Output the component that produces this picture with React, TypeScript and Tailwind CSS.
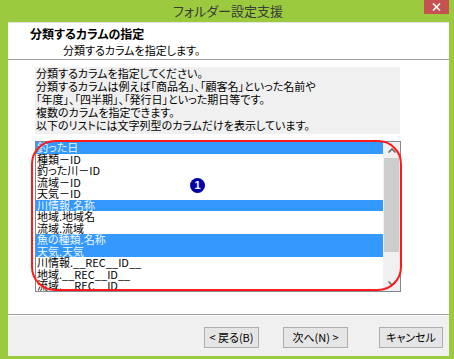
import React from "react";

const items: { label: string; sel: boolean }[] = [
  { label: "釣った日", sel: true },
  { label: "種類－ID", sel: false },
  { label: "釣った川－ID", sel: false },
  { label: "流域－ID", sel: false },
  { label: "天気－ID", sel: false },
  { label: "川情報.名称", sel: true },
  { label: "地域.地域名", sel: false },
  { label: "流域.流域", sel: false },
  { label: "魚の種類.名称", sel: true },
  { label: "天気.天気", sel: true },
  { label: "川情報.__REC__ID__", sel: false },
  { label: "地域.__REC__ID__", sel: false },
  { label: "流域.__REC__ID__", sel: false },
];

export default function App() {
  return (
    <div className="w-[454px] h-[359px] bg-[#9bca3e] flex flex-col overflow-hidden font-['Noto_Sans_CJK_JP','Liberation_Sans',sans-serif] [font-feature-settings:'palt'] text-black">
      {/* title bar */}
      <div className="relative h-[22px] flex items-center justify-center text-[13px] leading-[22px] text-[#3a3a3a]">
        <span className="pl-[2px]">フォルダー設定支援</span>
        <div className="absolute right-[5px] top-0 w-[25px] h-[14px] bg-[#c75050] flex items-center justify-center">
          <svg width="9" height="8" viewBox="0 0 9 8">
            <path d="M1 0.5 L8 7.5 M8 0.5 L1 7.5" stroke="white" strokeWidth="1.6" />
          </svg>
        </div>
      </div>

      <div className="ml-[8px] mr-[5px] h-[334px] flex flex-col bg-white">
        {/* header */}
        <div className="h-[38px] border-t border-[#e3e3e3] border-b border-b-[#a0a0a0] pl-[22px] pt-[3px]">
          <div className="text-[12px] font-bold leading-[15px]">分類するカラムの指定</div>
          <div className="pl-[33px] text-[11px] leading-[15px] mt-[2px]">分類するカラムを指定します。</div>
        </div>

        {/* body */}
        <div className="h-[254px] pl-[27px] pt-[7px]">
          <div className="w-[365px] h-[67px] bg-[#f0f0f0] text-[11px] leading-[13px] pl-[1px]">
            <div>分類するカラムを指定してください。</div>
            <div>分類するカラムは例えば「商品名」、「顧客名」といった名前や</div>
            <div>「年度」、「四半期」、「発行日」といった期日等です。</div>
            <div>複数のカラムを指定できます。</div>
            <div>以下のリストには文字列型のカラムだけを表示しています。</div>
          </div>

          <div className="relative mt-[7px] w-[366px] h-[151px]">
            <div className="w-full h-full border border-[#828790] flex overflow-hidden">
              <div className="flex-1 flex flex-col overflow-hidden">
                {items.map((it, i) => (
                  <div
                    key={i}
                    className={
                      it.sel
                        ? "shrink-0 h-[11.5px] leading-[11.5px] text-[11px] pl-[1px] bg-[#3399ff] text-[#f0f6ff] whitespace-nowrap"
                        : "shrink-0 h-[11.5px] leading-[11.5px] text-[11px] pl-[1px] text-black whitespace-nowrap"
                    }
                  >
                    {it.label}
                  </div>
                ))}
              </div>
              {/* scrollbar */}
              <div className="w-[17px] h-full bg-[#f0f0f0] flex flex-col">
                <div className="h-[16px] flex items-center justify-center">
                  <svg width="8" height="5" viewBox="0 0 8 5">
                    <path d="M0.5 4.5 L4 1 L7.5 4.5" stroke="#606060" strokeWidth="1.5" fill="none" />
                  </svg>
                </div>
                <div className="mx-[1px] h-[94px] bg-[#cdcdcd]" />
                <div className="flex-1" />
                <div className="h-[16px] flex items-center justify-center">
                  <svg width="8" height="5" viewBox="0 0 8 5">
                    <path d="M0.5 0.5 L4 4 L7.5 0.5" stroke="#606060" strokeWidth="1.5" fill="none" />
                  </svg>
                </div>
              </div>
            </div>

            {/* red annotation frame */}
            <div className="absolute left-[-4px] top-[-1px] w-[371px] h-[151px] border-2 border-[#ff1a1a] rounded-[24px] pointer-events-none" />
            {/* badge */}
            <div className="absolute left-[155px] top-[37px] w-[15px] h-[15px] rounded-full bg-[#0000a8] text-white text-[11px] font-bold leading-[15px] text-center font-['Liberation_Sans',sans-serif]">
              1
            </div>
          </div>
        </div>

        {/* separator */}
        <div className="h-[2px] border-t border-[#a0a0a0] bg-white" />

        {/* footer */}
        <div className="h-[40px] bg-[#f0f0f0] flex items-start justify-end pt-[11px] pr-[6px]">
          <button className="w-[55px] h-[21px] border border-[#adadad] bg-[#e5e5e5] text-[11px] leading-[19px] text-black">
            &lt; 戻る(B)
          </button>
          <button className="ml-[24px] w-[65px] h-[21px] border border-[#adadad] bg-[#e5e5e5] text-[11px] leading-[19px] text-black">
            次へ(N) &gt;
          </button>
          <button className="ml-[31px] w-[64px] h-[21px] border border-[#adadad] bg-[#e5e5e5] text-[11px] leading-[19px] text-black">
            キャンセル
          </button>
        </div>
      </div>
    </div>
  );
}
